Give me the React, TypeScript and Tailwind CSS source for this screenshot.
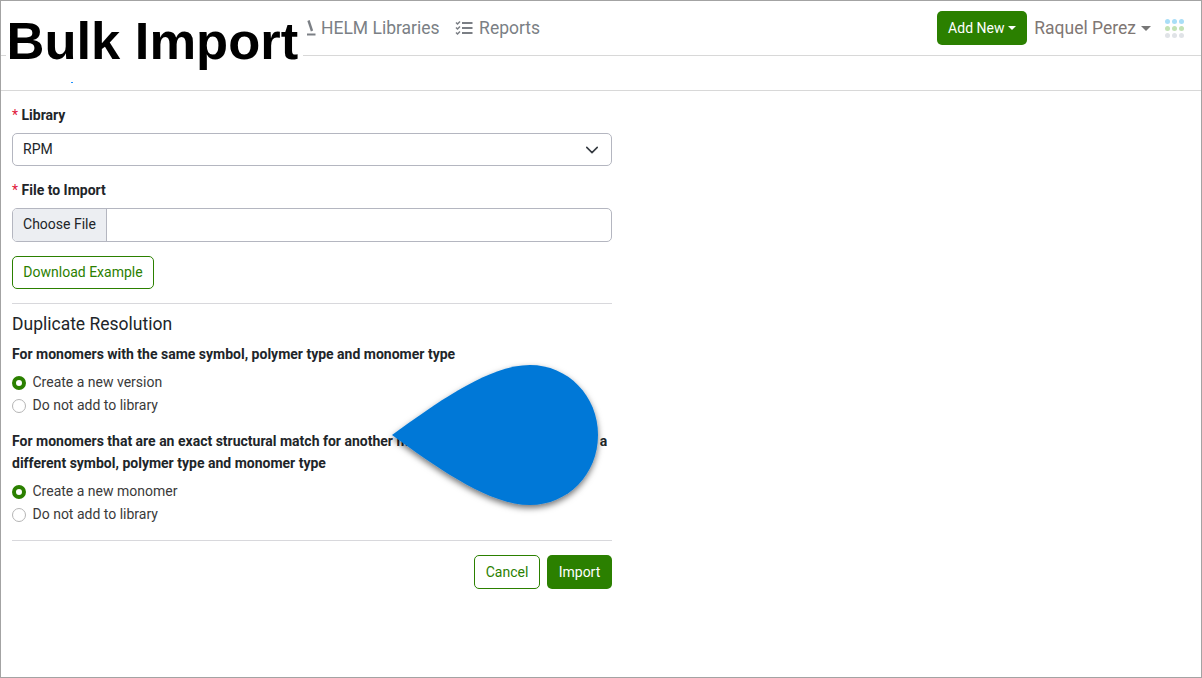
import React from "react";

function Radio({ checked, label }: { checked?: boolean; label: string }) {
  return (
    <div className="flex h-[23px] items-center gap-[6.5px]">
      {checked ? (
        <span className="h-[14px] w-[14px] rounded-full border-[4px] border-[#2b8000] bg-white" />
      ) : (
        <span className="h-[14px] w-[14px] rounded-full border border-[#b5b5b5] bg-white" />
      )}
      <span className="text-[14px] text-[#3a3a3a]">{label}</span>
    </div>
  );
}

function Req({ text }: { text: string }) {
  return (
    <div className="flex h-[21px] items-center gap-[3.5px] text-[14px] font-bold text-[#212529]">
      <span className="font-normal text-[#e0163a]">*</span>
      <span>{text}</span>
    </div>
  );
}

export default function App() {
  return (
    <div className="relative h-[678px] w-[1202px] overflow-hidden border border-[#a3a3a3] bg-white font-['Roboto',sans-serif]">
      <header className="flex h-[55px] items-center border-b border-[#d8d8d8] pl-[305px] pr-[17px]">
        <div className="flex items-center gap-[4px] text-[17.5px] text-[#7b7f85]">
          <svg width="11" height="16" viewBox="0 0 11 16" fill="none" stroke="#7b7f85">
            <path d="M2.5 0.5 L6 11" strokeWidth="2.4" />
            <path d="M1 14.5 H9.5" strokeWidth="2" />
          </svg>
          <span>HELM Libraries</span>
        </div>
        <div className="ml-[15px] flex items-center gap-[6.5px] text-[17.5px] text-[#7b7f85]">
          <svg width="18" height="16" viewBox="0 0 18 16" fill="none" stroke="#7b7f85">
            <path d="M1 2.5 L2.5 4 L5 1.5 M1 7.5 L2.5 9 L5 6.5 M1 12.5 L2.5 14 L5 11.5" strokeWidth="1.5" />
            <path d="M7 3 H17.5 M7 8 H17.5 M7 13 H17.5" strokeWidth="2" />
          </svg>
          <span>Reports</span>
        </div>
        <div className="ml-auto flex items-center">
          <button className="flex h-[34px] w-[90px] items-center justify-center gap-[4px] rounded-[5px] bg-[#2b8000] text-[14px] text-white">
            Add New
            <span className="border-x-[4px] border-t-[4px] border-x-transparent border-t-white" />
          </button>
          <div className="ml-[7px] flex items-center gap-[5px] text-[17.5px] text-[#7f7774]">
            Raquel Perez
            <span className="border-x-[5px] border-t-[5px] border-x-transparent border-t-[#777]" />
          </div>
          <div className="ml-[14px] grid grid-cols-3 gap-[2px]">
            {["#a9def7", "#a9def7", "#a9def7", "#c3e2b5", "#c3e2b5", "#c3e2b5", "#e0e3e7", "#e0e3e7", "#e0e3e7"].map((c, i) => (
              <span key={i} className="h-[5px] w-[5px] rounded-full" style={{ backgroundColor: c }} />
            ))}
          </div>
        </div>
      </header>
      <div className="h-[35px] border-b border-[#d8d8d8]" />

      <main className="ml-[11px] w-[600px] pt-[14px]">
        <Req text="Library" />
        <div className="mt-[7px] flex h-[33px] items-center justify-between rounded-[5px] border border-[#b4b6c0] pl-[10px] pr-[12px] text-[14px] text-[#212529]">
          RPM
          <svg width="14" height="14" viewBox="0 0 16 16" fill="none" stroke="#343a40" strokeWidth="1.8" strokeLinecap="round" strokeLinejoin="round">
            <path d="M2 5 L8 11 L14 5" />
          </svg>
        </div>
        <div className="mt-[14px]"><Req text="File to Import" /></div>
        <div className="mt-[7px] flex h-[34px] items-stretch overflow-hidden rounded-[5px] border border-[#b4b6c0] text-[14px] text-[#212529]">
          <div className="flex w-[94px] items-center justify-center border-r border-[#b4b6c0] bg-[#eceef2] pb-[2px]">Choose File</div>
        </div>
        <button className="mt-[14px] flex h-[33px] w-[142px] items-center justify-center rounded-[5px] border border-[#2b8000] text-[14px] text-[#2b8000]">Download Example</button>
        <div className="mt-[14px] border-t border-[#d8d8dc]" />
        <h2 className="mt-[10px] text-[17.5px] leading-[21px] text-[#212529]">Duplicate Resolution</h2>
        <div className="mt-[9px] text-[14px] font-bold leading-[21px] text-[#212529]">For monomers with the same symbol, polymer type and monomer type</div>
        <div className="mt-[6px]">
          <Radio checked label="Create a new version" />
          <Radio label="Do not add to library" />
        </div>
        <div className="mt-[13px] text-[14px] font-bold leading-[22px] text-[#212529]">
          For monomers that are an exact structural match for another monomer in the library but have a different symbol, polymer type and monomer type
        </div>
        <div className="mt-[6px]">
          <Radio checked label="Create a new monomer" />
          <Radio label="Do not add to library" />
        </div>
        <div className="mt-[14px] border-t border-[#d8d8dc]" />
        <div className="mt-[14px] flex justify-end gap-[7px]">
          <button className="flex h-[34px] w-[66px] items-center justify-center rounded-[5px] border border-[#2b8000] text-[14px] text-[#2b8000]">Cancel</button>
          <button className="flex h-[34px] w-[65px] items-center justify-center rounded-[5px] bg-[#2b8000] text-[14px] text-white">Import</button>
        </div>
      </main>

      <div className="absolute left-[5px] top-[5px] h-[72px] w-[297px] whitespace-nowrap bg-white pl-[0.5px] pt-[5px] font-['Liberation_Sans',sans-serif] text-[52.5px] font-bold leading-[60px] text-black">
        Bulk Import
      </div>
      <span className="absolute left-[70px] top-[81px] h-[1px] w-[2px] bg-[#1e90ff]" />
      <svg className="absolute left-[384px] top-[354px]" width="230" height="170" viewBox="385 355 230 170">
        <defs>
          <filter id="s" x="-20%" y="-20%" width="140%" height="140%">
            <feDropShadow dx="0" dy="3" stdDeviation="3" floodColor="#000" floodOpacity="0.55" />
          </filter>
        </defs>
        <path d="M392 435 C440 400 490 365 530 365 C568 365 598 396 598 435 C598 474 568 505 530 505 C490 505 440 470 392 435 Z" fill="#0078d7" filter="url(#s)" />
      </svg>
    </div>
  );
}
